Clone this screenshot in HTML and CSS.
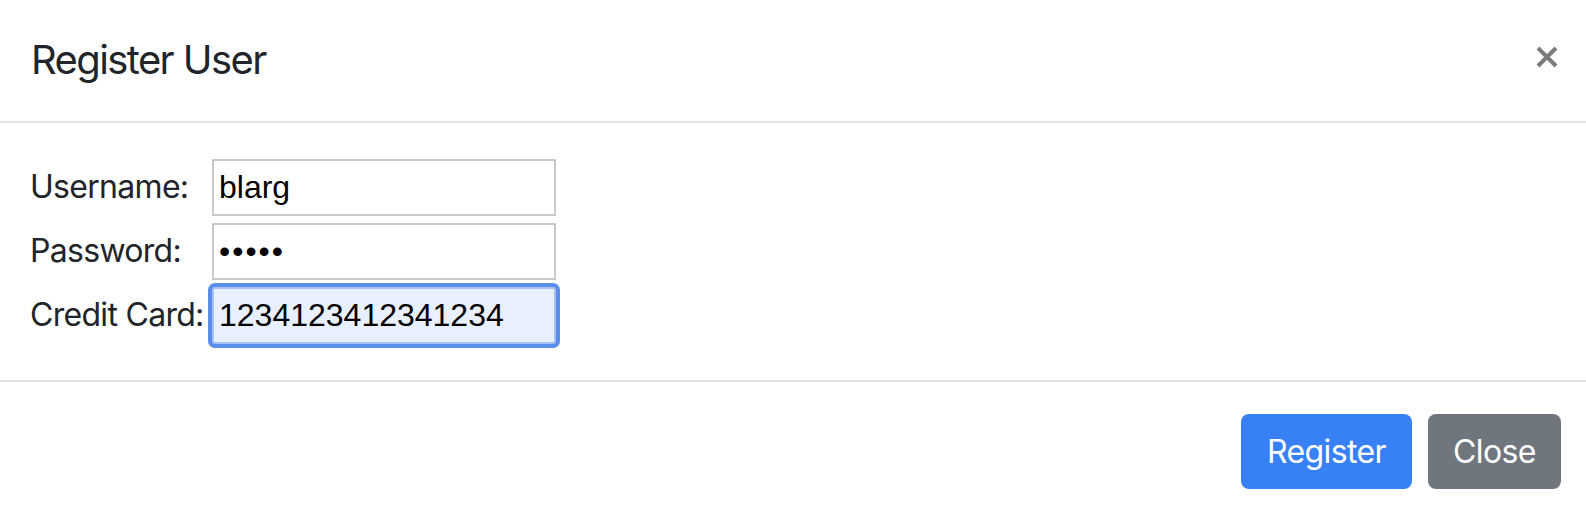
FILE: index.html
```html
<!DOCTYPE html>
<html>
<head>
<meta charset="utf-8">
<link rel="stylesheet" href="styles.css">
</head>
<body>
<div class="modal">
  <div class="modal-header">
    <h5 class="modal-title">Register User</h5>
    <button class="close" aria-label="Close">
      <svg width="22" height="22" viewBox="0 0 22 22"><path d="M2 2 L20 20 M20 2 L2 20" stroke="#7b7b7b" stroke-width="4" stroke-linecap="butt"/></svg>
    </button>
  </div>
  <div class="modal-body">
    <div class="form-grid">
      <label class="lbl">Username:</label>
      <input class="field" type="text" value="blarg">
      <label class="lbl">Password:</label>
      <input class="field pw" type="password" value="abcde">
      <label class="lbl">Credit Card:</label>
      <input class="field focused" type="text" value="1234123412341234">
    </div>
  </div>
  <div class="modal-footer">
    <button class="btn btn-primary">Register</button>
    <button class="btn btn-secondary">Close</button>
  </div>
</div>
</body>
</html>
```
FILE: styles.css
```css
html, body {
  margin: 0;
  padding: 0;
  overflow: hidden;
  background: #fff;
}
body {
  font-family: Inter, "Noto Sans", sans-serif;
  color: #212529;
}
.modal-header {
  display: flex;
  justify-content: space-between;
  align-items: center;
  height: 123px;
  box-sizing: border-box;
  padding: 0 28px 0 31px;
  border-bottom: 2px solid #e0e3e6;
}
.modal-title {
  margin: 0;
  font-size: 40px;
  font-weight: 400;
  line-height: 60px;
  letter-spacing: -1.6px;
  margin-top: -2px;
}
.close {
  background: none;
  border: 0;
  padding: 0;
  width: 22px;
  height: 22px;
  margin-top: -7px;
  display: flex;
}
.modal-body {
  padding: 36px 30px 36px;
}
.form-grid {
  display: grid;
  grid-template-columns: 182px 344px;
  row-gap: 7px;
  align-items: baseline;
}
.lbl {
  font-size: 32px;
  letter-spacing: -0.7px;
  white-space: nowrap;
}
.field {
  box-sizing: border-box;
  width: 344px;
  height: 57px;
  margin: 0;
  padding: 0 5px;
  border: 2px solid #c9c9c9;
  font-family: "Liberation Sans", Arial, sans-serif;
  font-size: 32px;
  color: #000;
  background: #fff;
  outline: none;
}
.pw {
  letter-spacing: 2px;
}
.focused {
  background: #e8effd;
  border-color: #a9c1f2;
  box-shadow: 0 0 0 4px #5b8ee8;
  border-radius: 3px;
}
.modal-footer {
  display: flex;
  justify-content: flex-end;
  gap: 16px;
  padding: 32px 25px;
  border-top: 2px solid #e0e3e6;
}
.btn {
  box-sizing: border-box;
  height: 75px;
  border: 0;
  border-radius: 8px;
  font-family: Inter, "Noto Sans", sans-serif;
  font-size: 32px;
  letter-spacing: -0.6px;
  color: #fff;
  padding: 0;
  text-align: center;
}
.btn-primary {
  width: 171px;
  background: #3880f6;
}
.btn-secondary {
  width: 133px;
  background: #6f767e;
}
```
